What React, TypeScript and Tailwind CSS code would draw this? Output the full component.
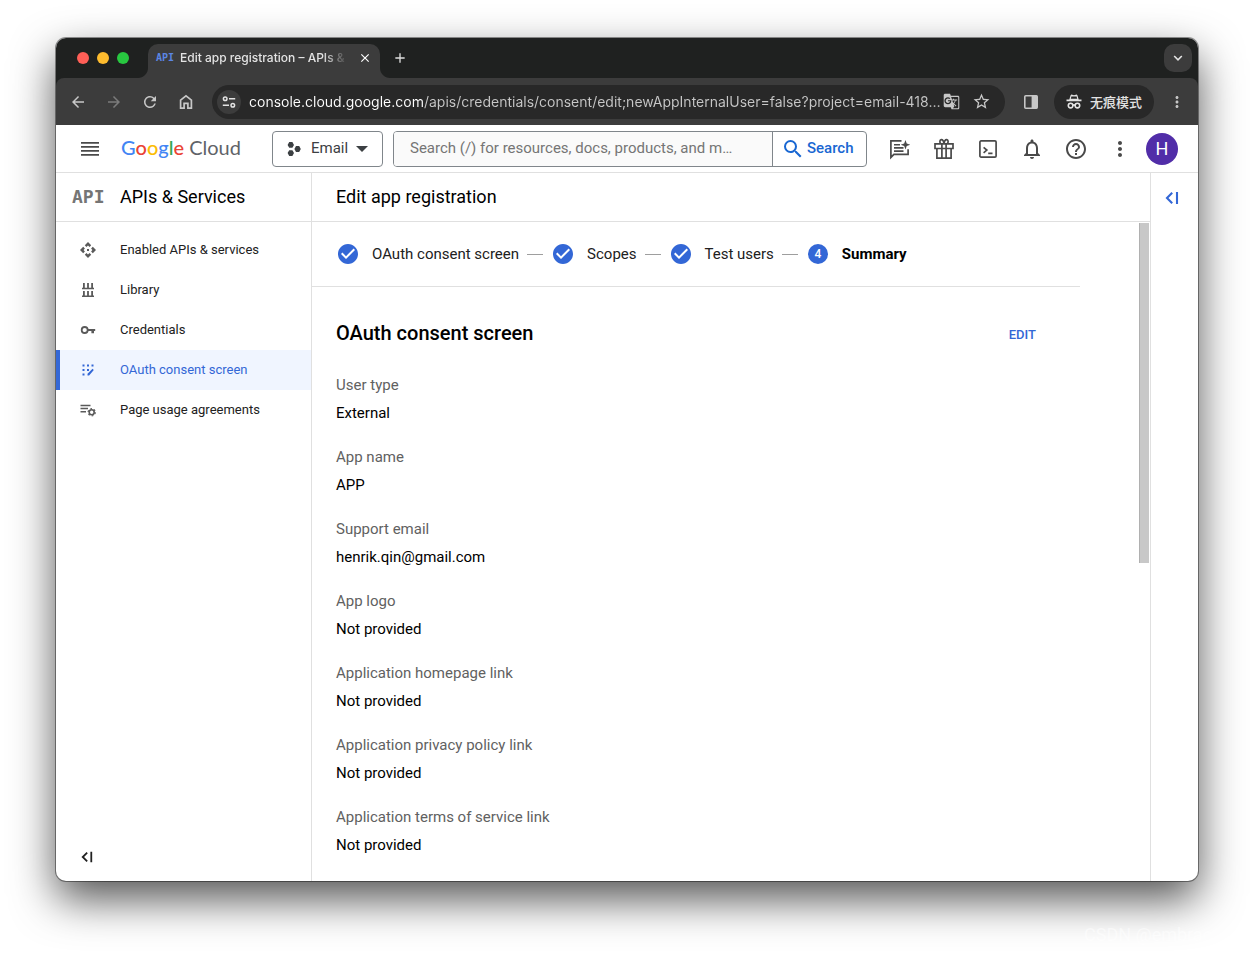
import React from "react";
import {
  MdArrowBack,
  MdArrowForward,
  MdRefresh,
  MdSearch,
  MdNotificationsNone,
  MdHelpOutline,
  MdMoreVert,
  MdStarOutline,
  MdAdd,
  MdClose,
  MdCheckCircle,
  MdGTranslate,
} from "react-icons/md";

type IconProps = { className?: string };

const HomeIcon = ({ className }: IconProps) => (
  <svg viewBox="0 0 16 16" className={className} fill="none" stroke="currentColor" strokeWidth="1.7">
    <path d="M2.6 14.2V6.1L8 1.9l5.4 4.2v8.1H9.9V9.3H6.1v4.9z" />
  </svg>
);

const TuneIcon = ({ className }: IconProps) => (
  <svg viewBox="0 0 14 14" className={className} fill="none" stroke="currentColor" strokeWidth="1.5">
    <circle cx="3.2" cy="3.8" r="1.8" />
    <path d="M7 3.8h6.2M.8 10.2H7" />
    <circle cx="10.8" cy="10.2" r="1.8" />
  </svg>
);

const SidePanelIcon = ({ className }: IconProps) => (
  <svg viewBox="0 0 16 16" className={className}>
    <rect x="1.8" y="1.8" width="12.4" height="12.4" rx="1" fill="none" stroke="currentColor" strokeWidth="1.6" />
    <path d="M8.6 1.6h5.6v12.8H8.6z" fill="currentColor" />
  </svg>
);

const IncognitoIcon = ({ className }: IconProps) => (
  <svg viewBox="0 0 16 16" className={className}>
    <path d="M4.6 1.3c.3-.7 1-.9 1.6-.6l1.8.6 1.8-.6c.6-.3 1.3-.1 1.6.6l1.3 4.2h2.8v1.7H.5V5.5h2.8z" fill="currentColor" />
    <path d="M5.4 2.6h5.2l.6 2.1H4.8z" fill="#282828" />
    <g fill="none" stroke="currentColor" strokeWidth="1.6">
      <circle cx="4.6" cy="11.6" r="2.3" />
      <circle cx="11.4" cy="11.6" r="2.3" />
      <path d="M6.8 11.3q1.2-.8 2.4 0" />
    </g>
  </svg>
);

const ChevronIcon = ({ className }: IconProps) => (
  <svg viewBox="0 0 10 10" className={className} fill="none" stroke="currentColor" strokeWidth="1.6">
    <path d="M1.2 3L5 6.8 8.8 3" />
  </svg>
);

const MenuIcon = ({ className }: IconProps) => (
  <svg viewBox="0 0 18 14" className={className} fill="currentColor">
    <path d="M0 0h18v1.7H0zM0 4h18v1.7H0zM0 8h18v1.7H0zM0 12h18v1.7H0z" />
  </svg>
);

const ProjectIcon = ({ className }: IconProps) => (
  <svg viewBox="0 0 14 14" className={className} fill="currentColor">
    <path d="M2.2 0h3.2L7 2.9 5.4 5.8H2.2L.6 2.9zM2.2 8.2h3.2L7 11.1 5.4 14H2.2L.6 11.1zM9 4.1h3.2L13.8 7l-1.6 2.9H9L7.4 7z" />
  </svg>
);

const ChatSparkIcon = ({ className }: IconProps) => (
  <svg viewBox="0 0 22 22" className={className} fill="none" stroke="currentColor" strokeWidth="1.7">
    <path d="M12.5 2.9H1.9v16.5l3-3h14.2v-5.2" />
    <path d="M5 6.7h6M5 9.9h9.5M5 13.1h9.5" strokeWidth="1.6" />
    <path d="M16.5 2l1.2 3.4 3.6 1.3-3.6 1.3-1.2 3.4-1.3-3.4-3.5-1.3 3.5-1.3z" fill="currentColor" stroke="none" />
  </svg>
);

const GiftIcon = ({ className }: IconProps) => (
  <svg viewBox="0 0 22 22" className={className} fill="none" stroke="currentColor" strokeWidth="1.7">
    <path d="M2 5.9h18v4.6H2zM3.9 10.5h14.2v9.7H3.9zM8.9 5.9v14.3M13.1 5.9v14.3" />
    <path d="M11 5.5C10.6 2.5 9.5 1.6 8.2 1.7 6.7 1.9 6.5 4 7.5 5.5M11 5.5c.4-3 1.5-3.9 2.8-3.8 1.5.2 1.7 2.3.7 3.8" />
  </svg>
);

const ShellIcon = ({ className }: IconProps) => (
  <svg viewBox="0 0 20 20" className={className} fill="none" stroke="currentColor" strokeWidth="1.7">
    <rect x="1.9" y="1.9" width="16.2" height="16.2" rx="1.2" />
    <path d="M5.6 8.4l3.2 2.7-3.2 2.7M10.2 14.4h4.3" />
  </svg>
);

const EnabledApisIcon = ({ className }: IconProps) => (
  <svg viewBox="0 0 16 16" className={className} fill="currentColor">
    <path d="M8 0l3.2 3.2-1.6 1.7L8 3.6 6.4 4.9 4.8 3.2zM8 16l-3.200-3.200 1.600-1.700L8 12.400l1.600-1.300 1.600 1.700zM0 8l3.200-3.200 1.700 1.600L3.600 8l1.300 1.600-1.700 1.600zM16 8l-3.200 3.200-1.700-1.600L12.400 8l-1.300-1.600 1.700-1.600z" />
    <rect x="7" y="7" width="2" height="2" />
  </svg>
);

const LibraryIcon = ({ className }: IconProps) => (
  <svg viewBox="0 0 16 16" className={className} fill="currentColor">
    <path d="M3 1h1.800v4.800H7.100V1h1.800v4.800h2.300V1H13v4.800h1v1.400H2V5.800h1zM3 9h1.800v4.600H7.100V9h1.800v4.600h2.300V9H13v4.600h1V15H2v-1.400h1z" />
  </svg>
);

const KeyIcon = ({ className }: IconProps) => (
  <svg viewBox="0 0 16 16" className={className}>
    <circle cx="4.7" cy="8" r="3" fill="none" stroke="currentColor" strokeWidth="1.8" />
    <path d="M8 7h7.2v2H14v2.200h-2.600V9H8z" fill="currentColor" />
  </svg>
);

const ConsentIcon = ({ className }: IconProps) => (
  <svg viewBox="0 0 16 16" className={className} fill="currentColor">
    <path d="M2.5 2.5h2v2h-2zM7 2.5h2v2H7zM11.500 2.500h2v2h-2zM2.500 7h2v2h-2zM7 7h2v2H7zM2.500 11.500h2v2h-2zM7.500 13.500v-1.700l5-5 1.300 1.300-4.700 5.400z" />
  </svg>
);

const AgreementsIcon = ({ className }: IconProps) => (
  <svg viewBox="0 0 16 16" className={className} fill="none" stroke="currentColor">
    <path d="M.5 3.400h10M.5 6.600h7.500M.5 9.800h5.500" strokeWidth="1.5" />
    <circle cx="11.7" cy="10.3" r="2.5" strokeWidth="1.6" />
    <circle cx="11.7" cy="10.3" r="3.6" strokeWidth="1.2" strokeDasharray="1.7 2.07" />
  </svg>
);

const CollapseIcon = ({ className }: IconProps) => (
  <svg viewBox="0 0 14 14" className={className} fill="none" stroke="currentColor" strokeWidth="2.1">
    <path d="M7.2 1.8L2 7l5.200 5.200M12 1v12" />
  </svg>
);

const GoogleCloudLogo = () => (
  <a href="#home" aria-label="Google Cloud" className="font-['Lato',sans-serif] text-[20px] leading-6 whitespace-nowrap">
    <span className="font-medium">
      <span className="text-[#4285f4]">G</span>
      <span className="text-[#ea4335]">o</span>
      <span className="text-[#fbbc04]">o</span>
      <span className="text-[#4285f4]">g</span>
      <span className="text-[#34a853]">l</span>
      <span className="text-[#ea4335]">e</span>
    </span>
    <span className="text-[#5f6368]"> Cloud</span>
  </a>
);

function TabStrip() {
  return (
    <div className="flex h-10 shrink-0 items-center bg-[#1f2120] pr-1.5 pl-[21px]">
      <div className="flex gap-2">
        <button aria-label="Close window" className="size-3 rounded-full bg-[#ff5f57]" />
        <button aria-label="Minimize window" className="size-3 rounded-full bg-[#febc2e]" />
        <button aria-label="Zoom window" className="size-3 rounded-full bg-[#28c840]" />
      </div>
      <svg viewBox="0 0 10 10" className="ml-[9px] size-2.5 self-end text-[#3c3c3c]" fill="currentColor">
        <path d="M10 0v10H0C5.5 10 10 5.5 10 0z" />
      </svg>
      <div className="flex h-[34px] w-[232px] items-center self-end rounded-t-[10px] bg-[#3c3c3c] px-2 pb-1.5">
        <span className="w-6 font-['DejaVu_Sans_Mono',monospace] text-[10px] leading-4 font-bold text-[#5b86e5]">API</span>
        <span className="min-w-0 flex-1 overflow-hidden mask-r-from-85% mask-r-to-100% text-[12px] leading-4 font-medium whitespace-nowrap text-[#e3e3e3]">
          Edit app registration – APIs &amp;
        </span>
        <button aria-label="Close tab" className="flex w-6 shrink-0 justify-end text-white">
          <MdClose className="size-3.5" />
        </button>
      </div>
      <svg viewBox="0 0 10 10" className="size-2.5 self-end text-[#3c3c3c]" fill="currentColor">
        <path d="M0 0v10h10C4.5 10 0 5.5 0 0z" />
      </svg>
      <button aria-label="New tab" className="flex size-5 items-center justify-center text-[#dedede]">
        <MdAdd className="size-4" />
      </button>
      <button aria-label="Search tabs" className="ml-auto flex size-7 items-center justify-center rounded-[10px] bg-[#3c3c3c] text-[#e3e3e3]">
        <ChevronIcon className="size-2.5" />
      </button>
    </div>
  );
}

function AddressBar() {
  return (
    <div className="shrink-0 bg-[#1f2120]">
      <div className="flex h-[47px] items-center rounded-t-lg bg-[#3c3c3c] pr-3 pl-1 text-[#c7c7c7]">
        <button aria-label="Back" className="flex w-9 justify-center">
          <MdArrowBack className="size-[18px]" />
        </button>
        <button aria-label="Forward" className="flex w-9 justify-center text-[#7b7b7b]">
          <MdArrowForward className="size-[18px]" />
        </button>
        <button aria-label="Reload" className="flex w-9 justify-center">
          <MdRefresh className="size-[18px]" />
        </button>
        <button aria-label="Home" className="flex w-9 justify-center">
          <HomeIcon className="size-4" />
        </button>
        <div className="ml-2 flex h-[34px] min-w-0 flex-1 items-center rounded-full bg-[#282828] pr-3.5 pl-[5px]">
          <button aria-label="Site information" className="flex size-6 shrink-0 items-center justify-center rounded-full bg-[#3c3c3c] text-[#e3e3e3]">
            <TuneIcon className="size-3.5" />
          </button>
          <input
            aria-label="Address"
            readOnly
            value="console.cloud.google.com/apis/credentials/consent/edit;newAppInternalUser=false?project=email-418…"
            className="ml-2 h-6 min-w-0 flex-1 bg-linear-to-r from-white from-[174px] to-[#c7c7c7] to-[174px] bg-clip-text text-[14px] text-ellipsis text-transparent outline-none"
          />
          <button aria-label="Translate this page" className="shrink-0">
            <MdGTranslate className="size-[17px]" />
          </button>
          <button aria-label="Bookmark this page" className="ml-3 shrink-0">
            <MdStarOutline className="size-[19px]" />
          </button>
        </div>
        <button aria-label="Side panel" className="ml-[18px] shrink-0">
          <SidePanelIcon className="size-4" />
        </button>
        <button className="ml-[15px] flex h-[34px] shrink-0 items-center gap-2 rounded-full bg-[#282828] px-3 font-['Noto_Sans_CJK_SC',sans-serif] text-[13px] font-medium text-[#e3e3e3]">
          <IncognitoIcon className="size-4" />
          无痕模式
        </button>
        <button aria-label="Browser menu" className="ml-3.5 shrink-0">
          <MdMoreVert className="size-[18px]" />
        </button>
      </div>
    </div>
  );
}

function ConsoleHeader() {
  const iconButton = "flex w-11 shrink-0 justify-center";
  return (
    <header className="flex h-12 shrink-0 items-center border-b border-[#e0e0e0] pr-5 pl-[25px] text-[#4a4a4a]">
      <button aria-label="Navigation menu" className="mr-[22px] shrink-0">
        <MenuIcon className="h-3.5 w-[18px]" />
      </button>
      <div className="w-[151px] shrink-0">
        <GoogleCloudLogo />
      </div>
      <button className="flex h-9 w-[111px] shrink-0 items-center rounded border border-[#80868b] pl-3.5 text-[15px] text-[#3c4043]">
        <ProjectIcon className="mr-2.5 size-3.5" />
        Email
        <svg viewBox="0 0 12 6" className="ml-2 h-1.5 w-3" fill="currentColor">
          <path d="M0 0h12L6 6z" />
        </svg>
      </button>
      <form role="search" className="mr-[11px] ml-2.5 flex h-9 min-w-0 flex-1 overflow-hidden rounded border border-[#80868b]">
        <input
          aria-label="Search"
          placeholder="Search (/) for resources, docs, products, and m…"
          className="min-w-0 flex-1 bg-[#fafafa] px-4 text-[15px] outline-none placeholder:text-[#757575]"
        />
        <button type="button" className="flex w-[94px] items-center border-l border-[#80868b] pl-2 text-[15px] font-medium text-[#1967d2]">
          <MdSearch className="mr-0.5 size-6" />
          Search
        </button>
      </form>
      <button aria-label="Assistant" className={iconButton}>
        <ChatSparkIcon className="size-[22px]" />
      </button>
      <button aria-label="Free trial" className={iconButton}>
        <GiftIcon className="size-[22px]" />
      </button>
      <button aria-label="Activate Cloud Shell" className={iconButton}>
        <ShellIcon className="size-5" />
      </button>
      <button aria-label="Notifications" className={iconButton}>
        <MdNotificationsNone className="size-6" />
      </button>
      <button aria-label="Help" className={iconButton}>
        <MdHelpOutline className="size-6" />
      </button>
      <button aria-label="Settings and utilities" className={iconButton}>
        <MdMoreVert className="size-6" />
      </button>
      <button aria-label="Account" className="ml-1 flex size-8 shrink-0 items-center justify-center rounded-full bg-[#512da8] text-[18px] text-white">
        H
      </button>
    </header>
  );
}

const navItems = [
  { label: "Enabled APIs & services", Icon: EnabledApisIcon },
  { label: "Library", Icon: LibraryIcon },
  { label: "Credentials", Icon: KeyIcon },
  { label: "OAuth consent screen", Icon: ConsentIcon, active: true },
  { label: "Page usage agreements", Icon: AgreementsIcon },
];

function Sidebar() {
  return (
    <aside className="flex w-64 shrink-0 flex-col border-r border-[#e0e0e0]">
      <div className="flex h-[49px] shrink-0 items-center border-b border-[#e0e0e0] pl-4">
        <span className="w-12 font-['DejaVu_Sans_Mono',monospace] text-[18px] leading-6 font-bold text-[#757575]">API</span>
        <h2 className="text-[18px] leading-6 text-black">APIs &amp; Services</h2>
      </div>
      <nav className="flex flex-col pt-2">
        {navItems.map(({ label, Icon, active }) => (
          <a
            key={label}
            href="#nav"
            aria-current={active ? "page" : undefined}
            className={
              active
                ? "flex h-10 items-center gap-6 border-l-4 border-[#3367d6] bg-[#f0f5ff] pl-5 text-[13px] leading-5 text-[#3367d6]"
                : "flex h-10 items-center gap-6 border-l-4 border-transparent pl-5 text-[13px] leading-5 text-[#212121]"
            }
          >
            <Icon className={active ? "size-4" : "size-4 text-[#5a5a5a]"} />
            {label}
          </a>
        ))}
      </nav>
      <button aria-label="Collapse navigation" className="mt-auto mb-[18px] ml-[25px] self-start text-[#212121]">
        <CollapseIcon className="size-3" />
      </button>
    </aside>
  );
}

const steps = ["OAuth consent screen", "Scopes", "Test users", "Summary"];

function Stepper() {
  return (
    <ol className="flex h-[65px] max-w-[768px] items-center gap-2 border-b border-[#e0e0e0] pl-6 text-[15px] text-[#212121]">
      {steps.map((step, i) => {
        const last = i === steps.length - 1;
        return (
          <React.Fragment key={step}>
            <li className="flex items-center gap-3">
              {last ? (
                <span className="mx-0.5 flex size-5 items-center justify-center rounded-full bg-[#3367d6] text-[12px] font-medium text-white">
                  {i + 1}
                </span>
              ) : (
                <MdCheckCircle className="size-6 text-[#3367d6]" />
              )}
              <span className={last ? "font-bold text-black" : ""}>{step}</span>
            </li>
            {!last && <li aria-hidden="true" className="h-px w-4 bg-[#9e9e9e]" />}
          </React.Fragment>
        );
      })}
    </ol>
  );
}

const fields = [
  ["User type", "External"],
  ["App name", "APP"],
  ["Support email", "henrik.qin@gmail.com"],
  ["App logo", "Not provided"],
  ["Application homepage link", "Not provided"],
  ["Application privacy policy link", "Not provided"],
  ["Application terms of service link", "Not provided"],
];

function MainPanel() {
  return (
    <main className="flex min-w-0 flex-1 flex-col">
      <div className="flex h-[49px] shrink-0 items-center border-b border-[#e0e0e0] pl-6">
        <h1 className="text-[18px] leading-6 text-black">Edit app registration</h1>
      </div>
      <div className="flex flex-1">
        <div className="min-w-0 flex-1">
          <Stepper />
          <section className="max-w-[768px] pt-8 pr-9 pl-6">
            <div className="flex items-center justify-between">
              <h2 className="text-[20px] leading-7 font-medium text-black">OAuth consent screen</h2>
              <button className="mt-1 px-2 text-[13px] leading-6 font-medium text-[#3367d6]">EDIT</button>
            </div>
            <dl className="mt-7 flex flex-col gap-6">
              {fields.map(([label, value]) => (
                <div key={label} className="flex flex-col gap-2 text-[15px] leading-5">
                  <dt className="text-[#616161]">{label}</dt>
                  <dd className="text-black">{value}</dd>
                </div>
              ))}
            </dl>
          </section>
        </div>
        <div aria-hidden="true" className="w-[11px] pt-px pr-px">
          <div className="h-[340px] border-l border-[#b0b0b0] bg-[#c8c8c8]" />
        </div>
      </div>
    </main>
  );
}

export default function App() {
  return (
    <div className="relative flex min-h-screen flex-col overflow-hidden bg-white px-14 pt-[38px] pb-[74px] font-['Roboto',sans-serif]">
      <div className="flex flex-1 flex-col overflow-hidden rounded-[10px] bg-white shadow-[0_0_0_1px_rgba(0,0,0,0.4),0_18px_44px_rgba(0,0,0,0.68)]">
        <div className="font-['Inter',sans-serif]">
          <TabStrip />
          <AddressBar />
        </div>
        <ConsoleHeader />
        <div className="flex flex-1">
          <Sidebar />
          <MainPanel />
          <aside className="w-12 shrink-0 border-l border-[#e0e0e0] pt-[18px] pl-3.5">
            <button aria-label="Show info panel" className="block text-[#3367d6]">
              <CollapseIcon className="size-3.5" />
            </button>
          </aside>
        </div>
      </div>
      <span className="absolute right-2 bottom-2 w-[162px] text-[18px] leading-6 text-white/50">CSDN @embrac</span>
    </div>
  );
}
